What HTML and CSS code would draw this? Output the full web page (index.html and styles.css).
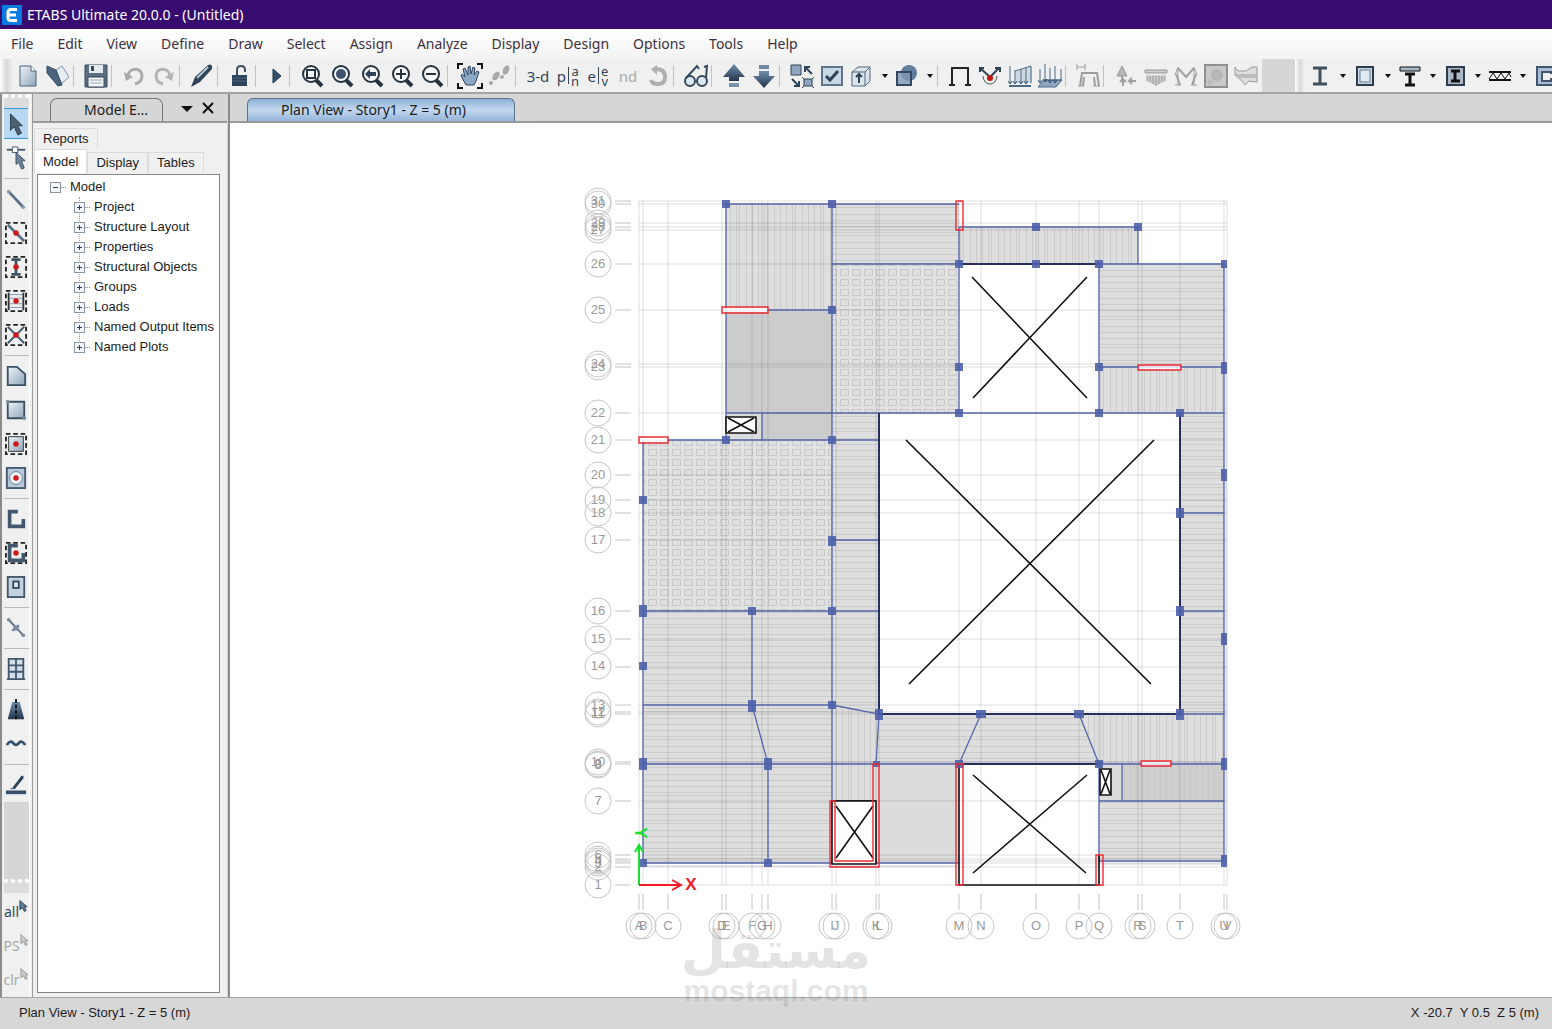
FILE: index.html
```html
<!DOCTYPE html>
<html lang="en">
<head>
<meta charset="utf-8">
<title>ETABS Ultimate 20.0.0 - (Untitled)</title>
<link rel="stylesheet" href="styles.css">
</head>
<body>

<!-- shared gradients -->
<svg class="defs" aria-hidden="true">
	<defs>
		<linearGradient id="steel" x1="0" y1="0" x2="1" y2="1"><stop offset="0" stop-color="#eef3f8"/><stop offset="1" stop-color="#8fa5bb"/></linearGradient>
		<linearGradient id="navy" x1="0" y1="0" x2="0" y2="1"><stop offset="0" stop-color="#6f8eae"/><stop offset="1" stop-color="#23364b"/></linearGradient>
	</defs>
</svg>

<header class="titlebar">
	<svg class="logo" viewBox="0 0 20 20"><rect width="20" height="20" fill="#0a7be0"/><path d="M15 4.500H9Q6 4.500 6 7.500V12.500Q6 15.500 9 15.500H15M6 10H14" fill="none" stroke="#fff" stroke-width="3"/></svg>
	<h1>ETABS Ultimate 20.0.0 - (Untitled)</h1>
</header>

<nav class="menu">
	<button>File</button>
	<button>Edit</button>
	<button>View</button>
	<button>Define</button>
	<button>Draw</button>
	<button>Select</button>
	<button>Assign</button>
	<button>Analyze</button>
	<button>Display</button>
	<button>Design</button>
	<button>Options</button>
	<button>Tools</button>
	<button>Help</button>
</nav>

<div class="toolbar">
	<div class="bar">
		<i class="grip"></i>
		<button aria-label="New"><svg viewBox="0 0 24 24"><path d="M4 2H15L20 7V22H4Z" fill="url(#steel)" stroke="#4f6378"/><path d="M15 2V7H20" fill="#fff" stroke="#4f6378"/></svg></button>
		<button aria-label="Open"><svg viewBox="0 0 24 24"><path d="M10 6L16 2L23 13L15 20Z" fill="#e6edf4" stroke="#7c90a5"/><path d="M1 2L10 6L16 21L12 22L1 9Z" fill="#4d657e" stroke="#33485e"/></svg></button>
		<i class="sep"></i>
		<button aria-label="Save"><svg viewBox="0 0 24 24"><path d="M1 1H23V23H1Z" fill="#5b6e82" stroke="#35485c"/><path d="M5 1H19V9H5Z" fill="#e3e9ef"/><path d="M7 2H10V7H7Z" fill="#35485c"/><path d="M4 13H20V23H4Z" fill="#f3f5f7" stroke="#35485c"/><path d="M6 16H18M6 19H18" stroke="#9aa8b6"/></svg></button>
		<i class="sep"></i>
		<button aria-label="Undo"><svg viewBox="0 0 24 24"><path d="M6 12C7 3 20 3 20 12C20 16 17 19 13 20" fill="none" stroke="#a9a9a9" stroke-width="3"/><path d="M2 8L4 17L11 13Z" fill="#a9a9a9"/></svg></button>
		<button aria-label="Redo"><svg viewBox="0 0 24 24"><path d="M18 12C17 3 4 3 4 12C4 16 7 19 11 20" fill="none" stroke="#b3b3b3" stroke-width="3"/><path d="M22 8L20 17L13 13Z" fill="#b3b3b3"/></svg></button>
		<i class="sep"></i>
		<button aria-label="Pen"><svg viewBox="0 0 24 24"><path d="M1 23L5 13L18 1Q23 -1 22 5L10 18Z" fill="#2f4358"/><path d="M7 14L18 3" stroke="#b4c7da" stroke-width="2"/></svg></button>
		<i class="sep"></i>
		<button aria-label="Unlock"><svg viewBox="0 0 24 24"><path d="M9 11V6Q9 2 13 2Q17 2 17 6V8" fill="none" stroke="#3b4e62" stroke-width="2"/><rect x="4" y="11" width="15" height="11" fill="#2d435a"/><path d="M4 14H19M4 17H19" stroke="#47607a"/></svg></button>
		<i class="sep"></i>
		<button class="run" aria-label="Run"><svg viewBox="0 0 24 24"><path d="M9 5L17 12L9 19Z" fill="#34506c" stroke="#1f3347"/></svg></button>
		<i class="sep"></i>
		<button aria-label="Rubber band zoom"><svg viewBox="0 0 24 24"><path d="M16 16L22 22" stroke="#26333f" stroke-width="4"/><circle cx="11" cy="10" r="8" fill="#f6f8fa" stroke="#26333f" stroke-width="2"/><path d="M7 6H15V14H7Z" fill="none" stroke="#26333f" stroke-width="2"/></svg></button>
		<button aria-label="Zoom full"><svg viewBox="0 0 24 24"><path d="M16 16L22 22" stroke="#26333f" stroke-width="4"/><circle cx="11" cy="10" r="8" fill="#f6f8fa" stroke="#26333f" stroke-width="2"/><circle cx="11" cy="10" r="5" fill="#3c546d"/></svg></button>
		<button aria-label="Zoom previous"><svg viewBox="0 0 24 24"><path d="M16 16L22 22" stroke="#26333f" stroke-width="4"/><circle cx="11" cy="10" r="8" fill="#f6f8fa" stroke="#26333f" stroke-width="2"/><path d="M5 10L10 5V8H16V12H10V15Z" fill="#2f4358"/></svg></button>
		<button aria-label="Zoom in"><svg viewBox="0 0 24 24"><path d="M16 16L22 22" stroke="#26333f" stroke-width="4"/><circle cx="11" cy="10" r="8" fill="#f6f8fa" stroke="#26333f" stroke-width="2"/><path d="M6 10H16M11 5V15" stroke="#26333f" stroke-width="2"/></svg></button>
		<button aria-label="Zoom out"><svg viewBox="0 0 24 24"><path d="M16 16L22 22" stroke="#26333f" stroke-width="4"/><circle cx="11" cy="10" r="8" fill="#f6f8fa" stroke="#26333f" stroke-width="2"/><path d="M6 10H16" stroke="#26333f" stroke-width="2"/></svg></button>
		<i class="sep"></i>
		<button aria-label="Pan"><svg class="big" viewBox="0 0 26 26"><path d="M1 6V1H6M20 1H25V6M25 20V25H20M6 25H1V20" fill="none" stroke="#111" stroke-width="2"/><path d="M9 22L4 13L5 11L8 14L6 6L8 5L11 12L11 4L13 3L14 11L16 4L18 5L17 12L20 8L22 9L19 18L17 22Z" fill="#8ba7c4" stroke="#30465d"/></svg></button>
		<button aria-label="Walk"><svg viewBox="0 0 24 24" fill="#a9a9a9"><ellipse cx="18" cy="6" rx="3" ry="5" transform="rotate(25 18 6)"/><circle cx="14" cy="13" r="2"/><ellipse cx="8" cy="12" rx="3" ry="5" transform="rotate(35 8 12)"/><circle cx="3" cy="19" r="2"/></svg></button>
		<i class="sep"></i>
		<button class="word">3-d</button>
		<button class="word" aria-label="Plan">p<b></b><span class="stack">a<br>n</span></button>
		<button class="word" aria-label="Elev">e<b></b><span class="stack">e<br>v</span></button>
		<button class="word off">nd</button>
		<button aria-label="Rotate"><svg viewBox="0 0 24 24"><path d="M10 5Q19 5 19 13Q19 20 12 20Q6 20 5 16" fill="none" stroke="#b0b0b0" stroke-width="4"/><path d="M11 1V11L5 5Z" fill="#b0b0b0"/></svg></button>
		<i class="sep"></i>
		<button aria-label="Display options"><svg viewBox="0 0 24 24"><g fill="#dbe6f0" stroke="#35485c" stroke-width="2"><circle cx="6" cy="17" r="5"/><circle cx="18" cy="17" r="5"/><path d="M2 14L13 2L15 5M22 14L23 2L20 3" fill="none"/></g></svg></button>
		<i class="sep"></i>
		<button aria-label="Move up"><svg viewBox="0 0 24 24"><path d="M12 0L23 13H17V17H7V13H1Z" fill="url(#navy)"/><path d="M7 19H17V23H7Z" fill="#7990a8"/></svg></button>
		<button aria-label="Move down"><svg viewBox="0 0 24 24"><path d="M12 24L23 12H17V7H7V12H1Z" fill="url(#navy)"/><path d="M7 1H17V5H7Z" fill="#6f88a1"/></svg></button>
		<i class="sep"></i>
		<button aria-label="Shrink"><svg viewBox="0 0 24 24"><path d="M1 1H11V11H1ZM14 15H22V22H14Z" fill="#8fa6be" stroke="#2f4358"/><path d="M22 10L15 3M15 8V3H20M2 15L9 22M4 22H9V17" fill="none" stroke="#2f4358" stroke-width="2"/><path d="M12 13L14 15M24 13L22 15M12 24L14 22M24 24L22 22" stroke="#2f4358"/></svg></button>
		<button aria-label="Set display"><svg viewBox="0 0 24 24"><rect x="2" y="3" width="20" height="18" fill="#c8d7e6" stroke="#60758b" stroke-width="2"/><path d="M6 12L10 16L18 7" fill="none" stroke="#2f4358" stroke-width="3"/></svg></button>
		<button aria-label="Assign joint"><svg viewBox="0 0 24 24"><path d="M2 8L8 3H20V17L15 22H2Z" fill="#dce5ee" stroke="#50657b"/><path d="M2 8H15V22M15 8L20 3" fill="none" stroke="#50657b"/><path d="M9 19V11M6 13L9 10L12 13" fill="none" stroke="#2f4358" stroke-width="2"/></svg></button>
		<button class="caret" aria-label="More"></button>
		<button aria-label="Objects"><svg viewBox="0 0 24 24"><circle cx="14" cy="9" r="8" fill="#5f7d9c"/><rect x="2" y="8" width="14" height="13" fill="#7e99b4" fill-opacity=".8" stroke="#33485e" stroke-width="2"/></svg></button>
		<button class="caret" aria-label="More"></button>
		<i class="sep"></i>
		<button aria-label="Undeformed"><svg viewBox="0 0 24 24"><path d="M4 21V4H20V21" fill="none" stroke="#222" stroke-width="2"/><path d="M1 21H7M17 21H23" stroke="#222" stroke-width="2"/></svg></button>
		<button aria-label="Joint"><svg viewBox="0 0 24 24"><path d="M11 12L2 4M13 12L21 4M2 8V4H6M17 4H22V8" fill="none" stroke="#2f4358" stroke-width="2"/><path d="M5 12Q6 20 12 20Q18 20 19 12" fill="none" stroke="#555"/><circle cx="12" cy="14" r="3" fill="#c41414"/></svg></button>
		<button aria-label="Frame load"><svg class="big" viewBox="0 0 26 26"><path d="M8 8L25 3V20H8Z" fill="#9fb6cd" fill-opacity=".4"/><path d="M3 3V20M8 7V20M14 6V20M19 5V20M24 3V20M8 8L24 3" fill="none" stroke="#4d6a88"/><path d="M2 23H24" stroke="#4d6a88" stroke-width="2"/><path d="M1 18L3 21L5 18M6 18L8 21L10 18M12 18L14 21L16 18M17 18L19 21L21 18" fill="none" stroke="#34506c"/></svg></button>
		<button aria-label="Area load"><svg class="big" viewBox="0 0 26 26"><path d="M1 24L7 17H25L19 24Z" fill="#8ea6bf" stroke="#4d6a88"/><path d="M3 6V20M8 1V19M13 5V20M18 3V20M24 6V18M6 17H25" stroke="#4d6a88"/><path d="M1 17L3 20L5 17M6 16L8 19L10 16M11 17L13 20L15 17M16 17L18 20L20 17" fill="none" stroke="#34506c"/></svg></button>
		<i class="sep"></i>
		<button aria-label="Deformed"><svg class="big" viewBox="0 0 26 26" fill="none" stroke="#9d9d9d"><path d="M2 1V7M10 1V7M2 4H10M3 23H9M18 23H25"/><path d="M5 23L7 10H22L24 23M8 23L9 14M20 23L19 14" stroke-width="2"/></svg></button>
		<i class="sep"></i>
		<button aria-label="Reactions"><svg viewBox="0 0 24 24"><path d="M8 2L13 12H3Z" fill="#b5b5b5" stroke="#999"/><path d="M8 12V16M9 22V15M6 18L9 15L12 18M22 17H15M18 14L15 17L18 20" fill="none" stroke="#a0a0a0" stroke-width="2"/></svg></button>
		<button aria-label="Soil"><svg viewBox="0 0 24 24"><path d="M1 6H23V9H1Z" fill="#ccc" stroke="#999"/><path d="M3 12H21V17L12 22L3 17Z" fill="#ccc"/><path d="M3 11V17M6 11V18M9 11V20M12 11V22M15 11V20M18 11V18M21 11V17" stroke="#999"/></svg></button>
		<button aria-label="Forces"><svg viewBox="0 0 24 24" fill="none" stroke="#a0a0a0"><path d="M4 21V4M20 4V21M1 21H7M17 21H23M4 3L1 11M20 3L23 11"/><path d="M2 10L6 21M22 10L18 21M4 4L12 13L20 4" stroke-width="2"/></svg></button>
		<button aria-label="Shell stress"><svg viewBox="0 0 24 24"><rect x="1" y="1" width="22" height="22" fill="#c9c9c9" stroke="#909090" stroke-width="2"/><circle cx="13" cy="11" r="6" fill="#b7b7b7"/><circle cx="6" cy="18" r="3" fill="#bdbdbd"/></svg></button>
		<button aria-label="Section cut"><svg viewBox="0 0 24 24" fill="#dedede" stroke="#9a9a9a"><path d="M1 3L4 7H12L18 3H23V18L15 17L11 21L8 17L1 11ZM1 11H23M4 13H22"/></svg></button>
	</div>
	<div class="bar end">
		<i class="grip"></i>
		<button aria-label="Steel frame"><svg viewBox="0 0 24 24"><path d="M5 4H19M5 20H19M12 4V20" stroke="#41515f" stroke-width="3"/></svg></button>
		<button class="caret" aria-label="More"></button>
		<button aria-label="Concrete frame"><svg viewBox="0 0 24 24"><rect x="4" y="3" width="16" height="18" fill="#c8d6e6" stroke="#2f3d4b" stroke-width="2"/><rect x="7" y="6" width="10" height="12" fill="#e1e9f2" stroke="#6b7f94"/></svg></button>
		<button class="caret" aria-label="More"></button>
		<button aria-label="Composite beam"><svg viewBox="0 0 24 24"><path d="M2 3H22V7H2Z" fill="#a9b9ca" stroke="#111"/><path d="M7 10H17M7 21H17M12 10V21" stroke="#111" stroke-width="3"/></svg></button>
		<button class="caret" aria-label="More"></button>
		<button aria-label="Composite column"><svg viewBox="0 0 24 24"><rect x="4" y="3" width="17" height="18" fill="#a9b9ca" stroke="#2f3d4b" stroke-width="2"/><path d="M8 7H17M8 17H17M12 7V17" stroke="#111" stroke-width="3"/></svg></button>
		<button class="caret" aria-label="More"></button>
		<button aria-label="Joist"><svg viewBox="0 0 24 24" fill="none" stroke="#111"><path d="M1 8H23M1 16H23" stroke-width="2"/><path d="M1 15L5 9L9 15L13 9L17 15L21 9L23 13"/></svg></button>
		<button class="caret" aria-label="More"></button>
		<button aria-label="Shear wall"><svg viewBox="0 0 24 24"><path d="M4 3H24V9H18V8H9V17H18V15H24V21H4Z" fill="#a9bdd4" stroke="#41566d" stroke-width="2"/></svg></button>
	</div>
</div>

<div class="work">
	<div class="side">
		<i class="grip"></i>
		<button class="on" aria-label="Select"><svg viewBox="0 0 24 24"><path d="M6 1V19L10 15L14 24L18 22L14 14H19Z" fill="#4d6175" stroke="#2b3947"/></svg></button>
		<button aria-label="Reshape"><svg viewBox="0 0 24 24"><path d="M2 3H22" stroke="#43586d" stroke-width="2"/><rect x="8" y="0" width="6" height="6" fill="#fff" stroke="#43586d"/><path d="M12 6V19L15 17L18 24L21 23L18 15H22Z" fill="#6e849b" stroke="#3c5064"/></svg></button>
		<i class="sep"></i>
		<button aria-label="Draw line"><svg viewBox="0 0 24 24"><path d="M4 4L20 21" stroke="#5c7187" stroke-width="3"/><circle cx="4" cy="4" r="2" fill="#8a9cae"/><circle cx="20" cy="21" r="2" fill="#8a9cae"/></svg></button>
		<button aria-label="Quick line"><svg viewBox="0 0 24 24"><path class="dash" d="M1 1H23V23H1Z"/><path d="M3 3L21 21" stroke="#5c7187" stroke-width="3"/><circle class="dot" cx="12" cy="12" r="3"/></svg></button>
		<button aria-label="Quick column"><svg viewBox="0 0 24 24"><path class="dash" d="M1 1H23V23H1Z"/><path d="M7 4H17M7 20H17M12 4V20" stroke="#3c5560" stroke-width="3"/><circle class="dot" cx="12" cy="12" r="3"/></svg></button>
		<button aria-label="Quick secondary beams"><svg viewBox="0 0 24 24"><path class="dash" d="M1 1H23V23H1Z"/><path d="M4 3V22M20 3V22" stroke="#333" stroke-width="2"/><path d="M5 5H19M5 9H19M5 15H19M5 19H19" stroke="#7e93a8"/><circle class="dot" cx="12" cy="12" r="3"/></svg></button>
		<button aria-label="Quick braces"><svg viewBox="0 0 24 24"><path class="dash" d="M1 1H23V23H1Z"/><path d="M3 3L21 21M21 3L3 21" stroke="#43586d" stroke-width="2"/><circle class="dot" cx="12" cy="12" r="3"/></svg></button>
		<i class="sep"></i>
		<button aria-label="Draw floor"><svg viewBox="0 0 24 24"><path d="M3 2H13L22 10V22H3Z" fill="url(#steel)" stroke="#3c5064" stroke-width="2"/></svg></button>
		<button aria-label="Draw rectangle"><svg viewBox="0 0 24 24"><path d="M3 3H21V21H3Z" fill="url(#steel)" stroke="#3c5064" stroke-width="2"/><circle cx="3" cy="3" r="2" fill="#7a8da0"/><circle cx="21" cy="21" r="2" fill="#7a8da0"/></svg></button>
		<button aria-label="Quick floor"><svg viewBox="0 0 24 24"><path class="dash" d="M1 1H23V23H1Z"/><rect x="4" y="4" width="16" height="16" fill="url(#steel)" stroke="#333"/><circle class="dot" cx="12" cy="12" r="3"/></svg></button>
		<button aria-label="Floor opening"><svg viewBox="0 0 24 24"><rect x="2" y="1" width="20" height="22" fill="#b8c8d8" stroke="#43586d" stroke-width="2"/><circle cx="12" cy="12" r="7" fill="#eef2f6" stroke="#60758b"/><circle class="dot" cx="12" cy="12" r="3"/></svg></button>
		<i class="sep"></i>
		<button aria-label="Draw wall"><svg viewBox="0 0 24 24"><path d="M14 4H5V20H20V12" fill="none" stroke="#43586d" stroke-width="4"/></svg></button>
		<button aria-label="Quick wall"><svg viewBox="0 0 24 24"><path class="dash" d="M1 1H23V23H1Z"/><path d="M14 4H5V20H20V12" fill="none" stroke="#43586d" stroke-width="4"/><circle class="dot" cx="12" cy="12" r="3"/></svg></button>
		<button aria-label="Wall opening"><svg viewBox="0 0 24 24"><rect x="3" y="1" width="18" height="22" fill="#c4d1de" stroke="#43586d" stroke-width="2"/><rect x="9" y="6" width="6" height="7" fill="#e8eef4" stroke="#33485e" stroke-width="2"/></svg></button>
		<i class="sep"></i>
		<button aria-label="Draw link"><svg viewBox="0 0 24 24"><path d="M4 3L20 20M8 15L15 9" stroke="#5c7187" stroke-width="2"/><circle cx="4" cy="3" r="2" fill="#7a8da0"/><circle cx="20" cy="20" r="2" fill="#7a8da0"/><circle cx="12" cy="12" r="3" fill="#7a8da0"/></svg></button>
		<i class="sep"></i>
		<button aria-label="Wall stacks"><svg viewBox="0 0 24 24"><path d="M4 1H20V23H4ZM12 1V23M4 8H20M4 15H20M2 23H22" fill="#d3dde7" stroke="#43586d" stroke-width="2"/></svg></button>
		<i class="sep"></i>
		<button aria-label="Towers"><svg viewBox="0 0 24 24"><path d="M8 3H16L21 22H3Z" fill="url(#navy)"/><path d="M12 0V24" stroke="#111" stroke-width="2" stroke-dasharray="4 2"/></svg></button>
		<button aria-label="Strip"><svg viewBox="0 0 24 24"><path d="M2 13Q6 7 9 11Q12 15 15 11Q18 7 22 13" fill="none" stroke="#34506c" stroke-width="3"/></svg></button>
		<i class="sep"></i>
		<button aria-label="Snap"><svg viewBox="0 0 24 24"><path d="M8 15L18 2Q21 1 20 5L11 16Z" fill="#2f4358"/><path d="M1 18H23V22H1Z" fill="#34506c"/><path d="M6 16H11" stroke="#34506c"/></svg></button>
		<i class="gap"></i>
		<i class="grip"></i>
		<button class="sel">all<svg viewBox="0 0 10 14"><path d="M1 1V11L4 9L6 13L8 12L6 8H9Z" fill="#5f7d9c" stroke="#2b3947"/></svg></button>
		<button class="sel off">PS<svg viewBox="0 0 10 14"><path d="M1 1V11L4 9L6 13L8 12L6 8H9Z" fill="#c9c9c9" stroke="#999"/></svg></button>
		<button class="sel off">clr<svg viewBox="0 0 10 14"><path d="M1 1V11L4 9L6 13L8 12L6 8H9Z" fill="#c9c9c9" stroke="#999"/></svg></button>
	</div>

	<aside class="explorer">
		<div class="head">
			<h2>Model E...</h2>
			<button class="drop" aria-label="Panel menu"></button>
			<button class="close" aria-label="Close"><svg viewBox="0 0 12 12"><path d="M1 1L11 11M11 1L1 11" stroke="#111" stroke-width="2"/></svg></button>
		</div>
		<div class="tabs"><button>Reports</button></div>
		<div class="tabs">
			<button class="on">Model</button>
			<button>Display</button>
			<button>Tables</button>
		</div>
		<div class="tree">
			<div class="root"><button class="exp" aria-label="Collapse"></button><span>Model</span></div>
			<ul>
				<li><button class="exp plus" aria-label="Expand"></button><span>Project</span></li>
				<li><button class="exp plus" aria-label="Expand"></button><span>Structure Layout</span></li>
				<li><button class="exp plus" aria-label="Expand"></button><span>Properties</span></li>
				<li><button class="exp plus" aria-label="Expand"></button><span>Structural Objects</span></li>
				<li><button class="exp plus" aria-label="Expand"></button><span>Groups</span></li>
				<li><button class="exp plus" aria-label="Expand"></button><span>Loads</span></li>
				<li><button class="exp plus" aria-label="Expand"></button><span>Named Output Items</span></li>
				<li><button class="exp plus" aria-label="Expand"></button><span>Named Plots</span></li>
			</ul>
		</div>
	</aside>

	<main class="view">
		<div class="viewtabs"><button>Plan View - Story1 - Z = 5 (m)</button></div>
		<svg class="plan" viewBox="230 123 1322 874">
			<defs>
				<pattern id="ph" width="40" height="28" patternUnits="userSpaceOnUse"><rect width="40" height="28" fill="#dedede"/><path d="M0 2.500H40M0 8.500H40M0 11.500H40M0 18.500H40M0 24.500H40" stroke="#cbcbcb"/></pattern>
				<pattern id="pv" width="28" height="40" patternUnits="userSpaceOnUse"><rect width="28" height="40" fill="#dedede"/><path d="M2.500 0V40M8.500 0V40M11.500 0V40M18.500 0V40M24.500 0V40" stroke="#cbcbcb"/></pattern>
				<pattern id="pd" width="40" height="4" patternUnits="userSpaceOnUse"><rect width="40" height="4" fill="#cdcdcd"/><path d="M0 1.500H40" stroke="#c8c8c8"/></pattern>
				<pattern id="pdv" width="6" height="40" patternUnits="userSpaceOnUse"><rect width="6" height="40" fill="#cfcfcf"/><path d="M2.500 0V40" stroke="#c8c8c8"/></pattern>
				<pattern id="pw" x="837" y="267" width="12" height="10" patternUnits="userSpaceOnUse"><rect width="12" height="10" fill="#e2e2e2"/><rect x="3.500" y="2.500" width="8" height="6" fill="#dfdfdf" stroke="#c9c9c9"/></pattern>
			</defs>

			<!-- slabs -->
			<path fill="url(#pv)" d="M726 204H832V310H726ZM959 227H1138V264H959ZM1099 367H1224V413H1099ZM832 705L879 714L876 764V801H832ZM1079 714H1224V764H1099Z"/>
			<path fill="url(#ph)" d="M832 204H959V264H832ZM1099 264H1224V367H1099ZM832 413H879V714L832 705ZM1180 413H1224V714H1180ZM643 611H832V863H643ZM879 714H1079L1099 764H876ZM1099 801H1224V861H1099Z"/>
			<path fill="url(#pw)" d="M832 264H959V413H832ZM643 440H832V611H643Z"/>
			<path fill="url(#pd)" d="M726 310H832V413H726ZM762 413H832V440H762Z"/>
			<path fill="url(#pdv)" d="M1122 764H1224V801H1122Z"/>
			<path fill="#dcdcdc" d="M726 413H762V440H726ZM1099 764H1122V801H1099ZM876 764H959V863H876Z"/>

			<!-- grid -->
			<path class="grid" d="M639 201V885M643 201V885M668 201V885M722 201V885M726 201V885M752 201V885M762 201V885M768 201V885M832 201V885M836 201V885M876 201V885M879 201V885M959 201V885M981 201V885M1036 201V885M1079 201V885M1099 201V885M1138 201V885M1142 201V885M1180 201V885M1224 201V885M1227 201V885"/>
			<path class="grid" d="M639 201H1227M639 204H1227M639 223H1227M639 227H1227M639 230H1227M639 264H1227M639 310H1227M639 364H1227M639 367H1227M639 413H1227M639 440H1227M639 475H1227M639 500H1227M639 513H1227M639 540H1227M639 611H1227M639 639H1227M639 667H1227M639 705H1227M639 712H1227M639 714H1227M639 762H1227M639 764H1227M639 801H1227M639 855H1227M639 859H1227M639 861H1227M639 863H1227M639 867H1227M639 885H1227"/>
			<path class="stub" d="M639 894V910M643 894V910M668 894V910M722 894V910M726 894V910M752 894V910M762 894V910M768 894V910M832 894V910M836 894V910M876 894V910M879 894V910M959 894V910M981 894V910M1036 894V910M1079 894V910M1099 894V910M1138 894V910M1142 894V910M1180 894V910M1224 894V910M1227 894V910"/>
			<path class="stub" d="M615 201H631M615 204H631M615 223H631M615 227H631M615 230H631M615 264H631M615 310H631M615 364H631M615 367H631M615 413H631M615 440H631M615 475H631M615 500H631M615 513H631M615 540H631M615 611H631M615 639H631M615 667H631M615 705H631M615 712H631M615 714H631M615 762H631M615 764H631M615 801H631M615 855H631M615 859H631M615 861H631M615 863H631M615 867H631M615 885H631"/>

			<!-- grid bubbles -->
			<g class="bubble">
				<circle cx="639" cy="926" r="13"/><text x="639" y="930">A</text>
				<circle cx="643" cy="926" r="13"/><text x="643" y="930">B</text>
				<circle cx="668" cy="926" r="13"/><text x="668" y="930">C</text>
				<circle cx="722" cy="926" r="13"/><text x="722" y="930">D</text>
				<circle cx="726" cy="926" r="13"/><text x="726" y="930">E</text>
				<circle cx="752" cy="926" r="13"/><text x="752" y="930">F</text>
				<circle cx="762" cy="926" r="13"/><text x="762" y="930">G</text>
				<circle cx="768" cy="926" r="13"/><text x="768" y="930">H</text>
				<circle cx="832" cy="926" r="13"/><text x="832" y="930">I</text>
				<circle cx="836" cy="926" r="13"/><text x="836" y="930">J</text>
				<circle cx="876" cy="926" r="13"/><text x="876" y="930">K</text>
				<circle cx="879" cy="926" r="13"/><text x="879" y="930">L</text>
				<circle cx="959" cy="926" r="13"/><text x="959" y="930">M</text>
				<circle cx="981" cy="926" r="13"/><text x="981" y="930">N</text>
				<circle cx="1036" cy="926" r="13"/><text x="1036" y="930">O</text>
				<circle cx="1079" cy="926" r="13"/><text x="1079" y="930">P</text>
				<circle cx="1099" cy="926" r="13"/><text x="1099" y="930">Q</text>
				<circle cx="1138" cy="926" r="13"/><text x="1138" y="930">R</text>
				<circle cx="1142" cy="926" r="13"/><text x="1142" y="930">S</text>
				<circle cx="1180" cy="926" r="13"/><text x="1180" y="930">T</text>
				<circle cx="1224" cy="926" r="13"/><text x="1224" y="930">U</text>
				<circle cx="1227" cy="926" r="13"/><text x="1227" y="930">V</text>

				<circle cx="598" cy="201" r="13"/><text x="598" y="205">31</text>
				<circle cx="598" cy="204" r="13"/><text x="598" y="208">30</text>
				<circle cx="598" cy="223" r="13"/><text x="598" y="227">29</text>
				<circle cx="598" cy="227" r="13"/><text x="598" y="231">28</text>
				<circle cx="598" cy="230" r="13"/><text x="598" y="234">27</text>
				<circle cx="598" cy="264" r="13"/><text x="598" y="268">26</text>
				<circle cx="598" cy="310" r="13"/><text x="598" y="314">25</text>
				<circle cx="598" cy="364" r="13"/><text x="598" y="368">24</text>
				<circle cx="598" cy="367" r="13"/><text x="598" y="371">23</text>
				<circle cx="598" cy="413" r="13"/><text x="598" y="417">22</text>
				<circle cx="598" cy="440" r="13"/><text x="598" y="444">21</text>
				<circle cx="598" cy="475" r="13"/><text x="598" y="479">20</text>
				<circle cx="598" cy="500" r="13"/><text x="598" y="504">19</text>
				<circle cx="598" cy="513" r="13"/><text x="598" y="517">18</text>
				<circle cx="598" cy="540" r="13"/><text x="598" y="544">17</text>
				<circle cx="598" cy="611" r="13"/><text x="598" y="615">16</text>
				<circle cx="598" cy="639" r="13"/><text x="598" y="643">15</text>
				<circle cx="598" cy="666" r="13"/><text x="598" y="670">14</text>
				<circle cx="598" cy="705" r="13"/><text x="598" y="709">13</text>
				<circle cx="598" cy="712" r="13"/><text x="598" y="716">12</text>
				<circle cx="598" cy="714" r="13"/><text x="598" y="718">11</text>
				<circle cx="598" cy="762" r="13"/><text x="598" y="766">10</text>
				<circle cx="598" cy="764" r="13"/><text x="598" y="768">9</text>
				<circle cx="598" cy="765" r="13"/><text x="598" y="769">8</text>
				<circle cx="598" cy="801" r="13"/><text x="598" y="805">7</text>
				<circle cx="598" cy="855" r="13"/><text x="598" y="859">6</text>
				<circle cx="598" cy="859" r="13"/><text x="598" y="863">5</text>
				<circle cx="598" cy="861" r="13"/><text x="598" y="865">4</text>
				<circle cx="598" cy="863" r="13"/><text x="598" y="867">3</text>
				<circle cx="598" cy="867" r="13"/><text x="598" y="871">2</text>
				<circle cx="598" cy="885" r="13"/><text x="598" y="889">1</text>
			</g>

			<!-- beams -->
			<path class="beam" d="M726 204H959M726 204V440M832 204V801M832 264H959M959 227H1138V264M959 227V413M1099 264V413M1099 264H1224V861M768 310H832M726 413H1224M1099 367H1224M668 440H879M762 413V440M643 440V863H959M643 611H879M832 540H879M752 611V705L768 764V863M643 705H832L879 714L876 764M643 764H1224M1180 513H1224M1180 611H1224M1180 714H1224M981 714L959 764M1079 714L1099 764V861H1224M1099 801H1224M1122 764V801"/>
			<path class="edge" d="M879 413V714H1180V413M959 264H1099M959 764H1099M832 801H876"/>
			<path class="soft" d="M643 866H959M1099 864H1224M643 762H1224M1226 264V861"/>

			<!-- openings -->
			<path class="shaft" d="M726 417H756V433H726ZM1100 769H1111V795H1100ZM832 801H876V864H832Z"/>
			<path class="open" d="M972 277L1087 398M1087 277L973 398M906 440L1151 684M1154 440L909 684M973 775L1086 873M1087 775L973 873M836 806L873 858M873 806L836 858"/>
			<path class="open" d="M728 418L754 432M754 418L728 432M1101 770L1110 794M1110 770L1101 794M959 764V885H1099V855"/>

			<!-- columns -->
			<path class="col" d="M722 200h8v8h-8zM828 200h8v8h-8zM828 306h8v8h-8zM1032 223h8v8h-8zM1134 223h8v8h-8zM955 260h8v8h-8zM1032 260h8v8h-8zM1095 260h8v8h-8zM1221 260h6v8h-6zM955 363h8v8h-8zM1095 363h8v8h-8zM1221 362h6v12h-6zM955 409h8v8h-8zM1095 409h8v8h-8zM1176 409h8v8h-8zM722 436h8v8h-8zM828 436h8v8h-8zM639 496h8v8h-8zM828 536h8v10h-8zM1221 469h6v12h-6zM1176 508h8v10h-8zM639 605h8v12h-8zM748 607h8v8h-8zM828 607h8v8h-8zM1176 606h8v10h-8zM1221 633h6v12h-6zM639 662h8v8h-8zM748 700h8v12h-8zM828 701h8v8h-8zM875 709h8v11h-8zM976 710h10v8h-10zM1074 710h10v8h-10zM1176 709h8v11h-8zM639 758h8v12h-8zM764 758h8v12h-8zM873 761h7v6h-7zM955 760h8v8h-8zM1095 760h8v8h-8zM1221 758h6v12h-6zM639 859h8v8h-8zM764 859h8v8h-8zM1221 855h6v12h-6z"/>

			<!-- walls -->
			<path class="wall" d="M956 201H963V230H956ZM722 307H768V313H722ZM639 437H668V443H639ZM1138 365H1181V370H1138ZM1141 761H1171V766H1141ZM956 764H963V885H956ZM1096 855H1103V885H1096ZM830 801V867H879V764H873V861H835V801Z"/>
			<path fill="#fff" fill-opacity=".8" d="M723 308H767V312H723ZM640 438H667V442H640ZM1139 366H1180V369H1139ZM1142 762H1170V765H1142Z"/>

			<!-- axes -->
			<path class="axis-y" d="M639 885V845M635 852L639 845L643 852"/>
			<path class="axis-x" d="M639 885H681M672 880L681 885L672 890"/>
			<text class="lab-x" x="691" y="890">X</text>
			<text class="lab-y" transform="translate(635 833) rotate(90)">Y</text>
		</svg>
		<div class="mark"><p lang="ar" dir="rtl">مستقل</p><p>mostaql.com</p></div>
	</main>
</div>

<footer class="status">
	<span>Plan View - Story1 - Z = 5 (m)</span>
	<span class="xyz">X -20.7&nbsp; Y 0.5&nbsp; Z 5 (m)</span>
</footer>

</body>
</html>
```
FILE: styles.css
```css
*{margin:0; padding:0; box-sizing:border-box;}
body{
	display:flex;
	flex-direction:column;
	height:100vh;
	overflow:hidden;
	background:#f0f0f0;
	font:14px/20px "Noto Sans", sans-serif;
	color:#1c1c1c;
}
button{border:0; background:none; font:inherit; color:inherit;}
svg{display:block;}
.defs{position:absolute; width:0; height:0;}

/* title + menu */
.titlebar{display:flex; align-items:center; gap:5px; height:29px; padding:0 2px; background:#380b70;}
.titlebar .logo{width:20px; height:20px;}
.titlebar h1{font-size:14px; font-weight:normal; color:#fff;}
.menu{display:flex; gap:24px; height:30px; padding-left:11px; background:linear-gradient(#fff, #f3f3f3);}
.menu button{color:#3d3040;}

/* top toolbar */
.toolbar{display:flex; justify-content:space-between; height:35px; border-bottom:2px solid #a3a3a3; background:#d6d6d6; overflow:hidden;}
.bar{display:flex; align-items:center; flex:none; padding-right:1px; background:#f0f0f0;}
.bar.end{width:257px; overflow:hidden;}
.bar button{display:flex; align-items:center; justify-content:center; flex:none; width:30px; height:30px;}
.bar .run{width:26px;}
.bar svg{width:24px; height:24px;}
.bar svg.big{width:26px; height:26px;}
.bar .grip{flex:none; width:13px; height:33px; background:linear-gradient(90deg, #fff, #d9d9d9 50%, #f0f0f0);}
.bar.end .grip{width:10px;}
.bar .sep{flex:none; width:8px; height:22px; border-left:1px solid #c2c2c2; border-right:6px solid #f0f0f0;}
.bar .caret{width:15px;}
.caret::before{content:""; border:3px solid transparent; border-top:4px solid #111; border-bottom:0;}
.bar .word{font-size:15px; line-height:20px; color:#34465a;}
.word b{width:1px; height:17px; margin:0 2px; background:#34465a;}
.word .stack{font-size:13px; line-height:10px;}
.bar .off{color:#a8a8a8;}

/* work area */
.work{display:flex; flex:1; min-height:0;}
.side{display:flex; flex-direction:column; width:30px; padding-left:2px; border-left:2px solid #8b8b8b; border-right:1px solid #fff; background:#f0f0f0;}
.side button{display:flex; flex:none; align-items:center; justify-content:center; width:24px; height:34px;}
.side button.on{height:31px; margin-bottom:2px; border-top:1px solid #3399e0; border-bottom:1px solid #3399e0; background:#b7d9f3;}
.side svg{width:22px; height:24px;}
.side .grip{flex:none; height:14px; border-top:4px dotted #fff; background:#dcdcdc;}
.side .sep{flex:none; height:7px; border-top:1px solid #f0f0f0; }
.side .sep::before{content:""; display:block; margin-top:2px; border-top:1px solid #bbb;}
.side .gap{flex:1; max-height:77px; background:#d6d6d6;}
.side .sel{align-items:flex-end; padding-bottom:8px; font-size:14px; line-height:14px; color:#34465a;}
.side .sel svg{flex:none; width:9px; height:14px; margin-bottom:6px;}
.side .sel.off{color:#a8a8a8;}
.dash{fill:none; stroke:#222; stroke-width:2; stroke-dasharray:5 3;}
.dot{fill:#d11818;}

/* model explorer */
.explorer{display:flex; flex-direction:column; width:196px; padding:0 0 4px; margin-left:2px; border-left:1px solid #9c9c9c; border-right:1px solid #d6d6d6; font:13px/20px "Liberation Sans", sans-serif;}
.head{display:flex; align-items:flex-end; height:29px; margin-bottom:5px; padding-left:17px; border-bottom:2px solid #9b9b9b; background:#d6d6d6;}
.head h2{width:113px; height:24px; margin-bottom:-1px; padding-left:33px; border:1px solid #777; border-bottom:0; border-radius:7px 7px 0 0; font:14px/22px "Noto Sans", sans-serif;}
.head button{height:26px;}
.head .drop{width:22px; margin-left:13px;}
.drop::before{content:""; display:inline-block; border:6px solid transparent; border-top:6px solid #111; border-bottom:0; vertical-align:middle;}
.head .close{display:flex; align-items:center; width:20px; padding-left:4px;}
.close svg{width:12px; height:12px;}
.tabs{display:flex; align-items:flex-end; padding-left:1px;}
.tabs button{height:21px; padding:0 8px; border:1px solid #dcdcdc; border-bottom:0;}
.tabs .on{height:24px; background:#fff;}
.tree{flex:1; margin:1px 7px 0 4px; padding:2px 0 0 12px; border:1px solid #858585; background:#fff;}
.tree ul{margin-left:29px; list-style:none; border-left:1px dotted #999; height:150px;}
.tree li, .root{display:flex; align-items:center; height:20px; white-space:nowrap;}
.tree li{margin-left:-6px;}
.tree span::before{content:""; display:inline-block; width:5px; margin-right:4px; border-top:1px dotted #888; vertical-align:middle;}
.exp{position:relative; flex:none; width:11px; height:11px; border:1px solid #8b96a5; background:#f3f5f8;}
.exp::before, .exp.plus::after{content:""; position:absolute; left:2px; top:4px; width:5px; height:1px; background:#2b3f6e;}
.exp.plus::after{left:4px; top:2px; width:1px; height:5px;}

/* plan view */
.view{position:relative; display:flex; flex-direction:column; flex:1; min-width:0; border-left:2px solid #8b8b8b; background:#fff;}
.viewtabs{flex:none; height:29px; padding:4px 0 0 17px; border-bottom:2px solid #999; background:#d6d6d6;}
.viewtabs button{height:23px; padding:0 48px 0 33px; border:1px solid #5d7086; border-bottom:0; border-radius:6px 6px 0 0; background:linear-gradient(#8fb1d8, #c3d8ef 50%, #93b4da); line-height:22px;}
.plan{flex:1; min-height:0; width:100%;}
.grid{fill:none; stroke:#000; stroke-opacity:.13;}
.stub{fill:none; stroke:#c4c4c4;}
.bubble circle{fill:none; stroke:#c6c6c6;}
.bubble text{fill:#999; font:13px "Liberation Sans", sans-serif; text-anchor:middle;}
.beam{fill:none; stroke:#5566aa; stroke-width:1.3;}
.edge{fill:none; stroke:#27305c; stroke-width:2;}
.soft{fill:none; stroke:#5566aa; stroke-opacity:.3;}
.open{fill:none; stroke:#111; stroke-width:1.6;}
.shaft{fill:#fff; stroke:#111; stroke-width:1.6;}
.col{fill:#4c60a8; fill-opacity:.9;}
.wall{fill:none; stroke:#ee2b33; stroke-width:1.4;}
.axis-y{fill:none; stroke:#19e02f; stroke-width:2;}
.axis-x{fill:none; stroke:#f01d28; stroke-width:2;}
.lab-x, .lab-y{font:bold 17px "Liberation Sans", sans-serif; text-anchor:middle;}
.lab-x{fill:#f01d28;}
.lab-y{fill:#19e02f;}

/* watermark lies over the drawing and the status bar */
.mark{position:absolute; left:451px; bottom:-10px; width:190px; text-align:center; color:rgba(120,120,120,.2); font:bold 30px/32px "Liberation Sans", "DejaVu Sans", sans-serif;}
.mark p[lang]{font:bold 52px/50px "DejaVu Sans", sans-serif;}

.status{display:flex; justify-content:space-between; align-items:center; height:32px; padding:0 13px 2px 19px; border-top:1px solid #a5a5a5; background:#d7d7d7; font:13px/20px "Liberation Sans", sans-serif;}
```
